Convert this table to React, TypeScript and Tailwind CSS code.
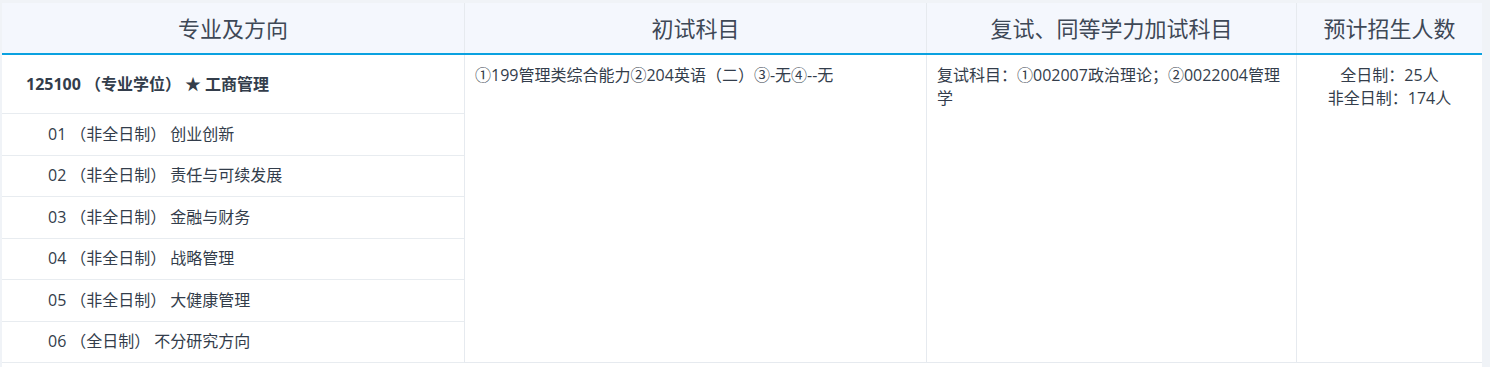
const directions = [
  { code: '01', mode: '（非全日制）', name: '创业创新' },
  { code: '02', mode: '（非全日制）', name: '责任与可续发展' },
  { code: '03', mode: '（非全日制）', name: '金融与财务' },
  { code: '04', mode: '（非全日制）', name: '战略管理' },
  { code: '05', mode: '（非全日制）', name: '大健康管理' },
  { code: '06', mode: '（全日制）', name: '不分研究方向' },
];

export default function App() {
  return (
    <div
      className="h-[367px] w-[1490px] overflow-hidden bg-[#f0f3f7] pt-[3px] pl-[2px] text-[#333d4b]"
      style={{ fontFamily: '"Open Sans", "Noto Sans CJK SC", sans-serif' }}
    >
      <div className="h-full w-[1480px] bg-white">
        {/* header */}
        <div className="flex h-[52px] border-b-2 border-[#0aa1e0] bg-[#f4f7fd] text-[22px] text-[#3e4856]">
          <div className="flex w-[463px] items-center justify-center border-r border-[#e6eaef]">专业及方向</div>
          <div className="flex w-[462px] items-center justify-center border-r border-[#e6eaef]">初试科目</div>
          <div className="flex w-[370px] items-center justify-center border-r border-[#e6eaef]">复试、同等学力加试科目</div>
          <div className="flex flex-1 items-center justify-center">预计招生人数</div>
        </div>

        {/* body */}
        <div className="flex text-[16px] leading-[23px]">
          <div className="w-[463px] border-r border-[#e6eaef]">
            <div className="flex h-[59px] items-center gap-[4px] border-b border-[#e8ecf0] pl-6 text-[16px] font-bold">
              <span>125100</span>
              <span>（专业学位）</span>
              <span>★ 工商管理</span>
            </div>
            {directions.map((d) => (
              <div key={d.code} className="flex h-[41.5px] items-center gap-[4px] border-b border-[#e8ecf0] pl-[46px]">
                <span>{d.code}</span>
                <span>{d.mode}</span>
                <span>{d.name}</span>
              </div>
            ))}
          </div>
          <div className="w-[462px] border-r border-b border-[#e6eaef] px-[10px] pt-[9px]">
            ①199管理类综合能力②204英语（二）③-无④--无
          </div>
          <div className="w-[370px] border-r border-b border-[#e6eaef] px-[10px] pt-[9px]">
            复试科目：①002007政治理论；②0022004管理学
          </div>
          <div className="flex-1 border-b border-[#e6eaef] pt-[9px] text-center">
            <div>全日制：25人</div>
            <div>非全日制：174人</div>
          </div>
        </div>
      </div>
    </div>
  );
}
